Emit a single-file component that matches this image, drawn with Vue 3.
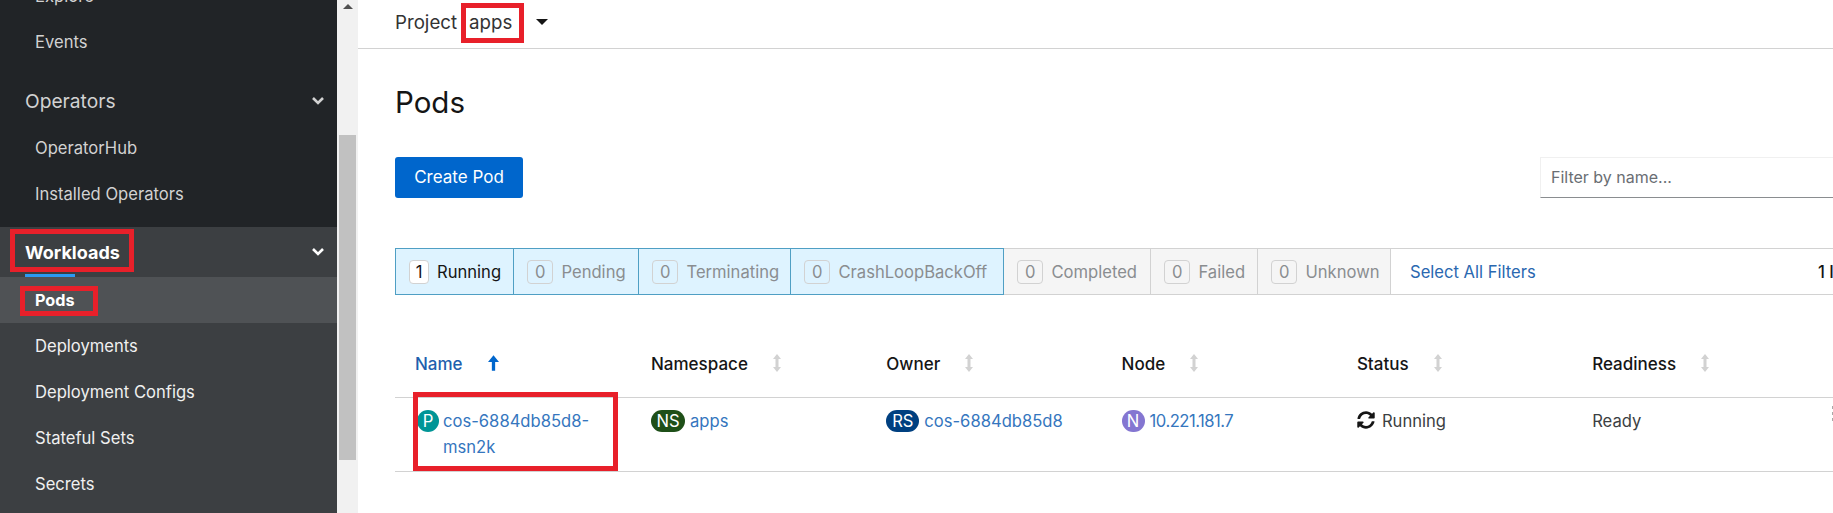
<template>
  <div class="page">
    <aside class="sidebar">
      <nav class="nav">
        <div class="nav-group">
          <a class="nav-item">Explore</a>
          <a class="nav-item">Events</a>
        </div>
        <div class="nav-group">
          <div class="nav-title">
            <span>Operators</span>
            <svg class="chevron" viewBox="0 0 14 10"><path d="M2 2l5 5 5-5" /></svg>
          </div>
          <a class="nav-item">OperatorHub</a>
          <a class="nav-item">Installed Operators</a>
        </div>
        <div class="nav-group nav-group-active">
          <div class="nav-title nav-title-active">
            <span class="nav-title-text">Workloads</span>
            <svg class="chevron" viewBox="0 0 14 10"><path d="M2 2l5 5 5-5" /></svg>
          </div>
          <a
            v-for="item in workloads"
            :key="item"
            class="nav-item"
            :class="{ current: item === 'Pods' }"
          >{{ item }}</a>
        </div>
      </nav>
      <div class="mark mark-workloads"></div>
      <div class="mark mark-pods"></div>
    </aside>

    <div class="scrollbar">
      <span class="scroll-arrow"></span>
      <span class="scroll-thumb"></span>
    </div>

    <main class="main">
      <div class="project-bar">
        <span>Project</span>
        <span class="project-name">apps</span>
        <span class="caret"></span>
        <div class="mark mark-apps"></div>
      </div>

      <div class="content">
        <h1 class="title">Pods</h1>

        <div class="toolbar">
          <button class="create-btn">Create Pod</button>
          <input class="filter-input" placeholder="Filter by name..." />
        </div>

        <div class="filters">
          <div
            v-for="f in statusFilters"
            :key="f.label"
            class="filter"
            :class="[f.group, { on: f.on }]"
            :style="{ width: f.width + 'px' }"
          >
            <span class="count">{{ f.count }}</span>
            <span>{{ f.label }}</span>
          </div>
          <a class="select-all">Select All Filters</a>
          <span class="item-count">1 Item</span>
        </div>

        <div class="table">
          <div class="row head">
            <div v-for="col in columns" :key="col" class="th" :class="{ sorted: col === 'Name' }">
              <span>{{ col }}</span>
              <svg v-if="col === 'Name'" class="sort-on" viewBox="0 0 10 14">
                <path d="M5 0l5 6H6.5v8h-3V6H0z" />
              </svg>
              <svg v-else class="sort" viewBox="0 0 8 18">
                <path d="M4 0l4 5H5.5v8H8l-4 5-4-5h2.5V5H0z" />
              </svg>
            </div>
          </div>
          <div class="row body">
            <div class="td pod-cell">
              <span class="badge badge-pod">P</span>
              <a class="link">cos-6884db85d8-<br />msn2k</a>
              <div class="mark mark-name"></div>
            </div>
            <div class="td">
              <span class="badge badge-ns">NS</span>
              <a class="link">apps</a>
            </div>
            <div class="td">
              <span class="badge badge-rs">RS</span>
              <a class="link">cos-6884db85d8</a>
            </div>
            <div class="td">
              <span class="badge badge-node">N</span>
              <a class="link node-link">10.221.181.7</a>
            </div>
            <div class="td status-cell">
              <svg class="sync" viewBox="0 0 512 512">
                <path d="M370.72 133.28C339.458 104.008 298.888 87.962 255.848 88c-77.458.068-144.328 53.178-162.791 126.85-1.344 5.363-6.122 9.15-11.651 9.15H24.103c-7.498 0-13.194-6.807-11.807-14.176C33.933 94.924 134.813 8 256 8c66.448 0 126.791 26.136 171.315 68.685L463.03 40.97C478.149 25.851 504 36.559 504 57.941V192c0 13.255-10.745 24-24 24H345.941c-21.382 0-32.09-25.851-16.971-40.971l41.75-41.749zM32 296h134.059c21.382 0 32.09 25.851 16.971 40.971l-41.75 41.75c31.262 29.273 71.835 45.319 114.876 45.28 77.418-.07 144.315-53.144 162.787-126.849 1.344-5.363 6.122-9.15 11.651-9.15h57.304c7.498 0 13.194 6.807 11.807 14.176C478.067 417.076 377.187 504 256 504c-66.448 0-126.791-26.136-171.315-68.685L48.97 471.03C33.851 486.149 8 475.441 8 454.059V320c0-13.255 10.745-24 24-24z" />
              </svg>
              <span class="plain">Running</span>
            </div>
            <div class="td"><span class="plain">Ready</span></div>
            <div class="td kebab"><i></i><i></i><i></i></div>
          </div>
        </div>
      </div>
    </main>
  </div>
</template>

<script setup>
const workloads = ["Pods", "Deployments", "Deployment Configs", "Stateful Sets", "Secrets"];

const statusFilters = [
  { label: "Running", count: 1, group: "blue", on: true, width: 119 },
  { label: "Pending", count: 0, group: "blue", width: 125 },
  { label: "Terminating", count: 0, group: "blue", width: 152 },
  { label: "CrashLoopBackOff", count: 0, group: "blue", width: 213 },
  { label: "Completed", count: 0, group: "grey", width: 147 },
  { label: "Failed", count: 0, group: "grey", width: 107 },
  { label: "Unknown", count: 0, group: "grey", width: 133 },
];

const columns = ["Name", "Namespace", "Owner", "Node", "Status", "Readiness"];
</script>

<style>
html,
body {
  margin: 0;
  background: #fff;
}
</style>

<style scoped>
.page {
  display: flex;
  width: 1833px;
  height: 513px;
  overflow: hidden;
  font-family: Inter, "Liberation Sans", sans-serif;
  font-size: 16.6px;
  color: #151515;
  background: #fff;
}

.sidebar {
  position: relative;
  flex: 0 0 337px;
  height: 513px;
  overflow: hidden;
  background: #212427;
}

.nav {
  margin-top: -27px;
}

.nav-group {
  padding-bottom: 10px;
}

.nav-group:first-child {
  padding-bottom: 11px;
}

.nav-group-active {
  padding-bottom: 20px;
  background: #3c3f42;
}

.nav-item {
  display: block;
  height: 46px;
  padding-left: 35px;
  line-height: 46px;
  color: #d2d2d2;
}

.nav-group-active .nav-item {
  color: #f0f0f0;
}

.nav-item.current {
  font-size: 16.2px;
  font-weight: 700;
  color: #fff;
  background: #4f5255;
}

.nav-title {
  display: flex;
  align-items: center;
  justify-content: space-between;
  height: 49px;
  padding: 0 12px 0 25px;
  font-size: 19.2px;
  color: #d2d2d2;
}

.nav-title-active {
  height: 50px;
  font-size: 18px;
  font-weight: 700;
  color: #fff;
}

.nav-title-text {
  position: relative;
  align-self: stretch;
  display: flex;
  align-items: center;
}

.nav-title-text::after {
  content: "";
  position: absolute;
  left: 0;
  bottom: 0;
  width: 50px;
  height: 3px;
  background: #2b9af3;
}

.chevron {
  width: 14px;
  height: 10px;
  fill: none;
  stroke: currentColor;
  stroke-width: 2.6;
}

.scrollbar {
  flex: 0 0 21px;
  display: flex;
  flex-direction: column;
  align-items: center;
  background: #f1f1f1;
}

.scroll-arrow {
  width: 0;
  height: 0;
  margin-top: 4px;
  border-left: 5px solid transparent;
  border-right: 5px solid transparent;
  border-bottom: 5px solid #505050;
}

.scroll-thumb {
  width: 17px;
  height: 325px;
  margin-top: 126px;
  background: #c1c1c1;
}

.main {
  flex: 1;
  min-width: 0;
}

.project-bar {
  position: relative;
  box-sizing: content-box;
  display: flex;
  align-items: center;
  height: 44px;
  padding: 0 0 4px 37px;
  border-bottom: 1px solid #d2d2d2;
  font-size: 18.7px;
  color: #333;
}

.project-name {
  margin-left: 12px;
}

.caret {
  width: 0;
  height: 0;
  margin-left: 24px;
  border-left: 6px solid transparent;
  border-right: 6px solid transparent;
  border-top: 6px solid #151515;
}

.content {
  padding-left: 37px;
}

.title {
  margin: 0;
  padding-top: 34px;
  font-size: 29.5px;
  font-weight: 400;
  line-height: 38px;
  color: #151515;
}

.toolbar {
  display: flex;
  justify-content: space-between;
  align-items: flex-start;
  margin-top: 36px;
}

.create-btn {
  width: 128px;
  height: 41px;
  padding: 0 0 2px;
  border: 0;
  border-radius: 3px;
  font: inherit;
  font-size: 17px;
  color: #fff;
  background: #06c;
}

.filter-input {
  box-sizing: border-box;
  width: 293px;
  height: 41px;
  padding: 0 10px 2px;
  border: 1px solid #f0f0f0;
  border-bottom: 1px solid #8a8d90;
  border-right: 0;
  outline: 0;
  font: inherit;
  font-size: 16px;
  background: #fff;
}

.filter-input::placeholder {
  color: #6a6e73;
}

.filters {
  display: flex;
  align-items: stretch;
  height: 47px;
  margin-top: 50px;
  box-sizing: border-box;
  border-top: 1px solid #d2d2d2;
  border-bottom: 1px solid #d2d2d2;
}

.filter {
  box-sizing: border-box;
  display: flex;
  align-items: center;
  gap: 8px;
  height: 47px;
  margin-top: -1px;
  padding-left: 13px;
  color: #8a8d90;
  white-space: nowrap;
}

.filter.blue {
  background: #def3ff;
  border: 1px solid #4f9fc4;
  border-left: 0;
}

.filter.blue:first-child {
  border-left: 1px solid #4f9fc4;
}

.filter.grey {
  background: #f5f5f5;
  border: 1px solid #d2d2d2;
  border-left: 0;
}

.filter.on {
  color: #151515;
}

.count {
  box-sizing: border-box;
  min-width: 20px;
  height: 24px;
  padding: 0 7px;
  border: 1px solid #d2d2d2;
  border-radius: 4px;
  line-height: 22px;
  text-align: center;
}

.filter.on .count {
  padding: 0 5px;
  background: #fff;
}

.select-all {
  align-self: center;
  margin-left: 19px;
  color: #2a68b0;
}

.item-count {
  align-self: center;
  margin-left: auto;
  width: 15px;
  overflow: hidden;
  font-weight: 500;
  white-space: nowrap;
}

.table {
  margin-top: 33px;
  width: 1500px;
}

.row {
  display: grid;
  grid-template-columns: 236px repeat(5, 235.3px) 1fr;
}

.head {
  height: 69px;
  border-bottom: 1px solid #d2d2d2;
}

.th {
  display: flex;
  align-items: center;
  gap: 25px;
  padding: 2px 0 0 20px;
  font-size: 17px;
  font-weight: 500;
}

.th.sorted {
  color: #1f5fae;
}

.sort {
  width: 8px;
  height: 18px;
  margin-top: -2px;
  fill: #d2d2d2;
}

.sort-on {
  width: 11px;
  height: 16px;
  margin-top: -2px;
  fill: #06c;
}

.body {
  height: 73px;
  border-bottom: 1px solid #d2d2d2;
}

.td {
  display: flex;
  align-items: flex-start;
  gap: 5px;
  padding: 10px 0 0 20px;
  line-height: 26px;
}

.pod-cell {
  position: relative;
  gap: 4px;
  padding-left: 22px;
}

.status-cell {
  gap: 7px;
}

.badge {
  flex: none;
  height: 22px;
  min-width: 22px;
  box-sizing: border-box;
  margin-top: 2px;
  border-radius: 11px;
  font-size: 16.6px;
  line-height: 22px;
  text-align: center;
  color: #fff;
}

.badge-pod {
  background: #009596;
}

.badge-ns {
  width: 34px;
  background: #1e4f18;
}

.badge-rs {
  width: 33px;
  background: #004080;
}

.badge-node {
  width: 23px;
  background: #8476d1;
}

.link {
  color: #3576be;
}

.node-link {
  letter-spacing: -0.5px;
}

.plain {
  color: #3c3f42;
}

.sync {
  width: 18px;
  height: 18px;
  margin-top: 3px;
  fill: #151515;
}

.kebab {
  flex-direction: column;
  gap: 3px;
  padding: 8px 0 0 24.5px;
}

.kebab i {
  width: 3px;
  height: 3px;
  background: #a9a9a9;
}

.mark {
  position: absolute;
  box-sizing: border-box;
  border: 5px solid #e8202a;
  pointer-events: none;
}

.mark-workloads {
  left: 10px;
  top: 229px;
  width: 124px;
  height: 43px;
}

.mark-pods {
  left: 20px;
  top: 286px;
  width: 78px;
  height: 30px;
}

.mark-apps {
  left: 103px;
  top: 3px;
  width: 63px;
  height: 40px;
}

.mark-name {
  left: 18px;
  top: -6px;
  width: 205px;
  height: 79px;
}
</style>
